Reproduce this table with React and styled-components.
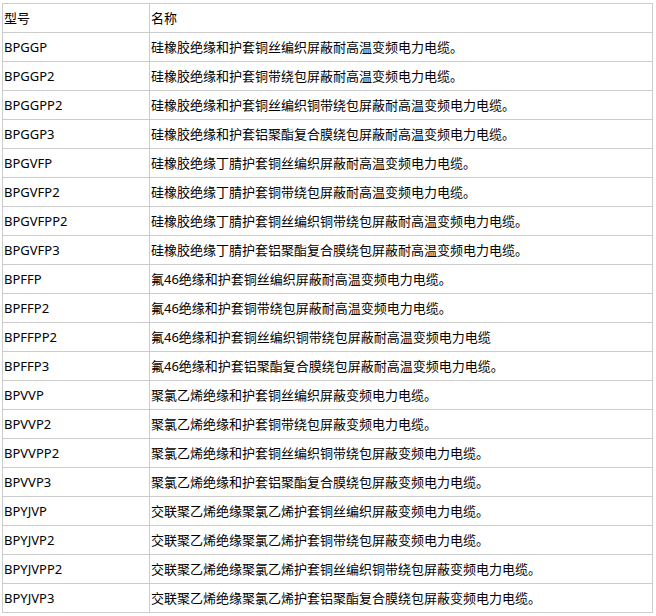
import React from "react";
import styled, { createGlobalStyle } from "styled-components";

const rows = [
  ["BPGGP", "硅橡胶绝缘和护套铜丝编织屏蔽耐高温变频电力电缆。"],
  ["BPGGP2", "硅橡胶绝缘和护套铜带绕包屏蔽耐高温变频电力电缆。"],
  ["BPGGPP2", "硅橡胶绝缘和护套铜丝编织铜带绕包屏蔽耐高温变频电力电缆。"],
  ["BPGGP3", "硅橡胶绝缘和护套铝聚酯复合膜绕包屏蔽耐高温变频电力电缆。"],
  ["BPGVFP", "硅橡胶绝缘丁腈护套铜丝编织屏蔽耐高温变频电力电缆。"],
  ["BPGVFP2", "硅橡胶绝缘丁腈护套铜带绕包屏蔽耐高温变频电力电缆。"],
  ["BPGVFPP2", "硅橡胶绝缘丁腈护套铜丝编织铜带绕包屏蔽耐高温变频电力电缆。"],
  ["BPGVFP3", "硅橡胶绝缘丁腈护套铝聚酯复合膜绕包屏蔽耐高温变频电力电缆。"],
  ["BPFFP", "氟46绝缘和护套铜丝编织屏蔽耐高温变频电力电缆。"],
  ["BPFFP2", "氟46绝缘和护套铜带绕包屏蔽耐高温变频电力电缆。"],
  ["BPFFPP2", "氟46绝缘和护套铜丝编织铜带绕包屏蔽耐高温变频电力电缆"],
  ["BPFFP3", "氟46绝缘和护套铝聚酯复合膜绕包屏蔽耐高温变频电力电缆。"],
  ["BPVVP", "聚氯乙烯绝缘和护套铜丝编织屏蔽变频电力电缆。"],
  ["BPVVP2", "聚氯乙烯绝缘和护套铜带绕包屏蔽变频电力电缆。"],
  ["BPVVPP2", "聚氯乙烯绝缘和护套铜丝编织铜带绕包屏蔽变频电力电缆。"],
  ["BPVVP3", "聚氯乙烯绝缘和护套铝聚酯复合膜绕包屏蔽变频电力电缆。"],
  ["BPYJVP", "交联聚乙烯绝缘聚氯乙烯护套铜丝编织屏蔽变频电力电缆。"],
  ["BPYJVP2", "交联聚乙烯绝缘聚氯乙烯护套铜带绕包屏蔽变频电力电缆。"],
  ["BPYJVPP2", "交联聚乙烯绝缘聚氯乙烯护套铜丝编织铜带绕包屏蔽变频电力电缆。"],
  ["BPYJVP3", "交联聚乙烯绝缘聚氯乙烯护套铝聚酯复合膜绕包屏蔽变频电力电缆。"],
];

const GlobalStyle = createGlobalStyle`
  body {
    margin: 0;
    background: #fff;
  }
`;

const Page = styled.div`
  padding: 3px 0 0 2px;
  font-family: "Noto Sans", "Noto Sans CJK SC", sans-serif;
  font-size: 13px;
  color: #000;
`;

const Table = styled.table`
  width: 651px;
  border-collapse: collapse;
  table-layout: fixed;
`;

const Cell = styled.td`
  width: ${(p) => (p.$first ? "144px" : "auto")};
  height: 28px;
  padding: 0 1px;
  border: 1px solid #cccccc;
  vertical-align: middle;
  white-space: nowrap;
  line-height: 18px;
`;

const App = () => {
  return (
    <Page>
      <GlobalStyle />
      <Table>
        <tbody>
          <tr>
            <Cell $first>型号</Cell>
            <Cell>名称</Cell>
          </tr>
          {rows.map(([code, name]) => (
            <tr key={code}>
              <Cell $first>{code}</Cell>
              <Cell>{name}</Cell>
            </tr>
          ))}
        </tbody>
      </Table>
    </Page>
  );
};

export default App;
